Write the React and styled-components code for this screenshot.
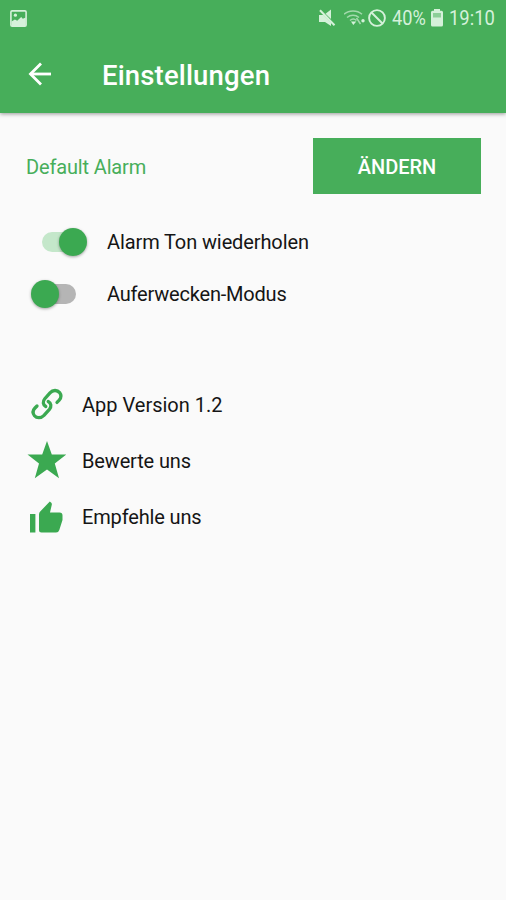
import styled, { createGlobalStyle } from 'styled-components';
import { useState } from 'react';

const GlobalStyle = createGlobalStyle`
  * {
    box-sizing: border-box;
  }

  body {
    margin: 0;
    background: #fafafa;
    font-family: Roboto, sans-serif;
  }

  svg {
    display: block;
    flex-shrink: 0;
  }
`;

const Screen = styled.div`
  min-height: 100vh;
  background: #fafafa;
  color: #151515;
`;

const Header = styled.header`
  height: 113px;
  background: #47ae5a;
  color: #fff;
  box-shadow: 0 1px 4px rgba(0, 0, 0, 0.4);
`;

const StatusBar = styled.div`
  display: flex;
  justify-content: space-between;
  align-items: center;
  height: 36px;
  padding: 0 10px;
  color: #d5f1da;
`;

const StatusIcons = styled.div`
  display: flex;
  align-items: center;
`;

const StatusText = styled.span`
  width: ${(props) => props.$width}px;
  margin: 0 ${(props) => props.$after || 0}px 0 6px;
  font-size: 20px;
  line-height: 36px;
  white-space: nowrap;
  transform: scaleX(${(props) => props.$scale});
  transform-origin: left;
`;

const Toolbar = styled.div`
  display: flex;
  align-items: center;
  height: 77px;
  padding-left: 28px;
`;

const BackButton = styled.button`
  display: flex;
  padding: 0;
  margin-top: -2px;
  border: none;
  background: none;
  color: #fff;
`;

const Title = styled.h1`
  margin: 0 0 0 49px;
  padding-top: 2px;
  font-size: 27.5px;
  font-weight: 500;
  line-height: 32px;
  letter-spacing: 0.15px;
`;

const AlarmRow = styled.div`
  display: flex;
  align-items: center;
  justify-content: space-between;
  padding: 25px 25px 0 26px;
`;

const AlarmName = styled.span`
  padding-top: 2px;
  color: #47ae5a;
  font-size: 20px;
  letter-spacing: -0.15px;
`;

const ChangeButton = styled.button`
  width: 168px;
  height: 56px;
  padding: 2px 0 0;
  border: none;
  background: #47ae5a;
  color: #fff;
  font-family: inherit;
  font-size: 20px;
  font-weight: 500;
`;

const SwitchList = styled.div`
  padding: 22px 0 0 30px;
`;

const SwitchRow = styled.label`
  display: flex;
  align-items: center;
  height: 52px;
`;

const Track = styled.span`
  display: flex;
  align-items: center;
  justify-content: ${(props) => (props.$on ? 'flex-end' : 'flex-start')};
  width: 35px;
  height: 20px;
  margin-left: ${(props) => (props.$on ? 12 : 11)}px;
  margin-right: ${(props) => (props.$on ? 30 : 31)}px;
  border-radius: 10px;
  background: ${(props) => (props.$on ? '#c4e7ca' : '#b5b5b5')};
`;

const Thumb = styled.span`
  flex-shrink: 0;
  width: 28px;
  height: 28px;
  margin: ${(props) => (props.$on ? '0 -10px 0 0' : '0 0 0 -10px')};
  border-radius: 50%;
  background: #3ba951;
  box-shadow: 0 1px 3px rgba(0, 0, 0, 0.35);
`;

const HiddenCheckbox = styled.input`
  display: none;
`;

const Label = styled.span`
  font-size: 20px;
  line-height: 24px;
  letter-spacing: ${(props) => props.$spacing || 0}px;
`;

const LinkList = styled.div`
  padding: 56px 0 0 26px;
`;

const LinkRow = styled.div`
  display: flex;
  align-items: center;
  gap: 16px;
  height: 56px;
  color: #3ba951;

  ${Label} {
    padding-top: 2px;
    color: #151515;
  }
`;

function PictureIcon() {
  return (
    <svg width="17" height="17" viewBox="0 0 17 17">
      <rect x="0.9" y="0.9" width="15.2" height="15.2" rx="1.2" fill="none" stroke="currentColor" strokeWidth="1.6" />
      <circle cx="5.4" cy="5.2" r="1.6" fill="currentColor" />
      <path d="M1.5 11.5l3.4-2 2.3 1.2 4-3.7 1.6 1.7 3-1.2V16h-14.3z" fill="currentColor" />
    </svg>
  );
}

function MutedIcon() {
  return (
    <svg width="26" height="18" viewBox="0 0 26 18">
      <path d="M1 6h4.5l7.5 7.5v3.5L7 13H1z" fill="currentColor" />
      <path d="M7.5 4.8L13 0.5v9.5z" fill="currentColor" />
      <path d="M2 1.2l14.5 15" stroke="currentColor" strokeWidth="2" />
    </svg>
  );
}

function WifiIcon() {
  return (
    <svg width="24" height="18" viewBox="0 0 24 18" fill="none" stroke="currentColor">
      <g strokeWidth="1.5" opacity="0.65">
        <path d="M0 5.2C5 0.8 13 0.8 18 5.2" />
        <path d="M3 8.5c3.500-3 8.500-3 12 0" />
        <path d="M6 11.500c2-1.800 4.500-1.800 6.500 0" />
        <path d="M12.500 9l4 6" />
      </g>
      <path d="M7 12.500l2.300 3.500 3-3.500z" fill="currentColor" stroke="none" />
      <circle cx="19" cy="11.700" r="1.700" fill="currentColor" stroke="none" />
    </svg>
  );
}

function BlockedIcon() {
  return (
    <svg width="18" height="18" viewBox="0 0 18 18" fill="none" stroke="currentColor" strokeWidth="1.9">
      <circle cx="9" cy="9" r="7.9" />
      <path d="M3.5 3.5l11 11" />
    </svg>
  );
}

function BatteryIcon() {
  return (
    <svg width="12" height="18" viewBox="0 0 12 18" fill="currentColor">
      <path d="M3 0h6v1.700H10.500q1.500 0 1.500 1.500v12.800q0 1.500-1.500 1.500h-9q-1.500 0-1.500-1.500V3.200q0-1.500 1.500-1.500H3z" />
      <path d="M2 4h8v4.500H2z" fill="#8ccf98" />
    </svg>
  );
}

function BackIcon() {
  return (
    <svg width="25" height="24" viewBox="0 0 25 24" fill="none" stroke="currentColor" strokeWidth="2.8">
      <path d="M2.5 12H23" />
      <path d="M13 1.6L2.5 12 13 22.4" />
    </svg>
  );
}

function ChainIcon() {
  return (
    <svg width="40" height="40" viewBox="0 0 40 40" fill="none" stroke="currentColor" strokeWidth="3.3" strokeLinecap="round">
      <path d="M19.8 22.5C16.8 20.8 16.5 17.5 18.8 14.8L24 8.8C27 5.5 31.5 6 33.6 8.6C35.4 11 35.2 14 33.2 16.2L31 18.4" />
      <path d="M22.2 17.5C25.3 19.2 25.7 22.7 23.4 25.4L18 31.3C14.8 34.5 10.7 34.3 8.5 31.7C6.6 29.3 6.8 26.3 9 24L11 22" />
    </svg>
  );
}

function StarIcon() {
  return (
    <svg width="40" height="40" viewBox="0 0 40 40" fill="currentColor">
      <path d="M21 1l4.800 13.600H40.200L28.800 23.500 33 38.200 21 29.500 8.800 38.200 13 23.500 1.500 14.600h14.700z" />
    </svg>
  );
}

function ThumbUpIcon() {
  return (
    <svg width="40" height="40" viewBox="0 0 40 40" fill="currentColor">
      <path d="M4 18h5.400v18.500H4z" />
      <path d="M23.800 5.500l1.500 1.200q.8.800.5 2L24 16.500h9.500q3 0 3 3v4.500l-3.200 10q-.8 2.500-3.300 2.500H15.500q-2.500 0-2.500-2.500V18.500q0-1.800 1.200-3z" />
    </svg>
  );
}

function SwitchSetting({ label, on, onChange, spacing }) {
  return (
    <SwitchRow>
      <HiddenCheckbox type="checkbox" checked={on} onChange={onChange} />
      <Track $on={on}>
        <Thumb $on={on} />
      </Track>
      <Label $spacing={spacing}>{label}</Label>
    </SwitchRow>
  );
}

export default function App() {
  const [repeat, setRepeat] = useState(true);
  const [wakeMode, setWakeMode] = useState(false);

  return (
    <>
      <GlobalStyle />
      <Screen>
        <Header>
          <StatusBar>
            <PictureIcon />
            <StatusIcons>
              <MutedIcon />
              <WifiIcon />
              <BlockedIcon />
              <StatusText $width={35} $after={4} $scale={0.91}>40%</StatusText>
              <BatteryIcon />
              <StatusText $width={47} $scale={0.92}>19:10</StatusText>
            </StatusIcons>
          </StatusBar>
          <Toolbar>
            <BackButton aria-label="Zurück">
              <BackIcon />
            </BackButton>
            <Title>Einstellungen</Title>
          </Toolbar>
        </Header>
        <AlarmRow>
          <AlarmName>Default Alarm</AlarmName>
          <ChangeButton>ÄNDERN</ChangeButton>
        </AlarmRow>
        <SwitchList>
          <SwitchSetting
            label="Alarm Ton wiederholen"
            spacing={-0.11}
            on={repeat}
            onChange={() => setRepeat(!repeat)}
          />
          <SwitchSetting
            label="Auferwecken-Modus"
            spacing={-0.2}
            on={wakeMode}
            onChange={() => setWakeMode(!wakeMode)}
          />
        </SwitchList>
        <LinkList>
          <LinkRow>
            <ChainIcon />
            <Label>App Version 1.2</Label>
          </LinkRow>
          <LinkRow>
            <StarIcon />
            <Label $spacing={-0.15}>Bewerte uns</Label>
          </LinkRow>
          <LinkRow>
            <ThumbUpIcon />
            <Label $spacing={-0.15}>Empfehle uns</Label>
          </LinkRow>
        </LinkList>
      </Screen>
    </>
  );
}
